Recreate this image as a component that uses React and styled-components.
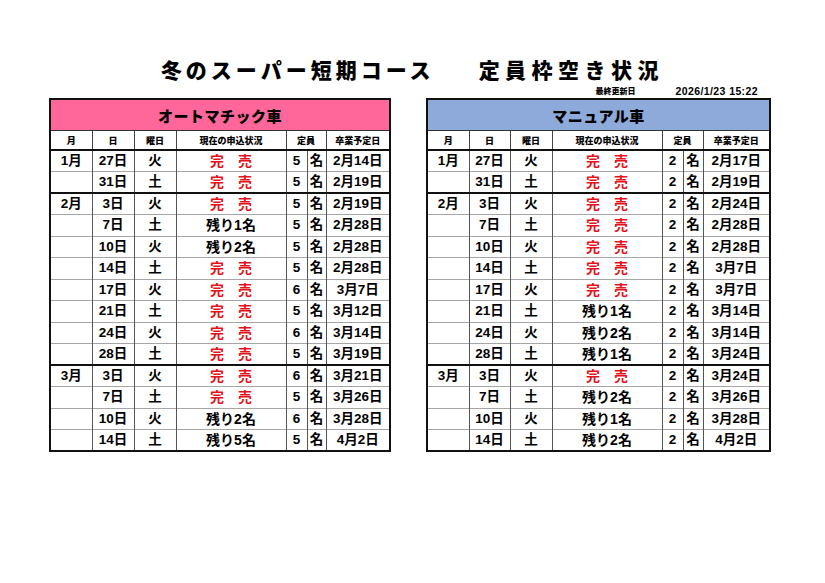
import styled, { createGlobalStyle } from "styled-components";

const GlobalStyle = createGlobalStyle`
  html, body {
    margin: 0;
    padding: 0;
    background: #fff;
  }
  body {
    font-family: "Liberation Sans", "Noto Sans CJK JP", sans-serif;
    color: #000;
  }
`;

const Page = styled.div`
  width: 825px;
  height: 583px;
  display: flex;
  flex-direction: column;
`;

const Title = styled.h1`
  margin: 56px 0 0;
  height: 27px;
  display: flex;
  justify-content: center;
  align-items: center;
  font-family: "Noto Sans CJK JP", sans-serif;
  font-weight: 900;
  font-size: 21px;
  line-height: 27px;
  gap: 44px;
`;

const TitlePart = styled.span`
  letter-spacing: ${(p) => p.$spacing}px;
`;

const Meta = styled.div`
  height: 15px;
  display: flex;
  justify-content: flex-end;
  align-items: center;
  gap: 40px;
  padding-right: 67px;
  font-weight: bold;
`;

const Updated = styled.span`
  font-family: "Noto Sans CJK JP", sans-serif;
  font-size: 8px;
  font-weight: 900;
`;

const Stamp = styled.span`
  font-size: 10.5px;
  letter-spacing: 0.4px;
`;

const Tables = styled.div`
  display: flex;
  gap: 35px;
  padding-left: 49px;
`;

const Table = styled.table`
  width: ${(p) => p.$width}px;
  table-layout: fixed;
  border-collapse: collapse;
  border: 2px solid #111;
`;

const Banner = styled.th`
  height: 30px;
  padding: 0;
  background: ${(p) => p.$color};
  border-bottom: 1px solid #333;
  font-family: "Noto Sans CJK JP", sans-serif;
  font-weight: 900;
  font-size: 15px;
  letter-spacing: 0.5px;
`;

const HeadCell = styled.th`
  height: 18px;
  padding: 0;
  border-left: 1px solid #444;
  border-bottom: 2px solid #111;
  font-family: "Noto Sans CJK JP", sans-serif;
  font-weight: 900;
  font-size: 9px;
  &:first-child {
    border-left: none;
  }
`;

const Row = styled.tr`
  height: 21.5px;
  border-top: ${(p) => (p.$group ? "2px solid #111" : "1px solid #a6a6a6")};
  &:first-of-type {
    border-top: none;
  }
`;

const Cell = styled.td`
  padding: 0;
  text-align: center;
  border-left: 1px solid #555;
  font-weight: bold;
  font-size: 13.5px;
  line-height: 20px;
  white-space: nowrap;
  &:first-child {
    border-left: none;
  }
`;

const Status = styled(Cell)`
  font-size: 14px;
  color: ${(p) => (p.$soldOut ? "#e3121b" : "#000")};
`;

const cols = {
  left: [42, 42, 42, 110, 21, 19, 64],
  right: [42, 41, 42, 110, 21, 20, 67],
};

const auto = [
  ["1月", "27日", "火", 0, 5, "2月14日"],
  ["", "31日", "土", 0, 5, "2月19日"],
  ["2月", "3日", "火", 0, 5, "2月19日"],
  ["", "7日", "土", 1, 5, "2月28日"],
  ["", "10日", "火", 2, 5, "2月28日"],
  ["", "14日", "土", 0, 5, "2月28日"],
  ["", "17日", "火", 0, 6, "3月7日"],
  ["", "21日", "土", 0, 5, "3月12日"],
  ["", "24日", "火", 0, 6, "3月14日"],
  ["", "28日", "土", 0, 5, "3月19日"],
  ["3月", "3日", "火", 0, 6, "3月21日"],
  ["", "7日", "土", 0, 5, "3月26日"],
  ["", "10日", "火", 2, 6, "3月28日"],
  ["", "14日", "土", 5, 5, "4月2日"],
];

const manual = [
  ["1月", "27日", "火", 0, 2, "2月17日"],
  ["", "31日", "土", 0, 2, "2月19日"],
  ["2月", "3日", "火", 0, 2, "2月24日"],
  ["", "7日", "土", 0, 2, "2月28日"],
  ["", "10日", "火", 0, 2, "2月28日"],
  ["", "14日", "土", 0, 2, "3月7日"],
  ["", "17日", "火", 0, 2, "3月7日"],
  ["", "21日", "土", 1, 2, "3月14日"],
  ["", "24日", "火", 2, 2, "3月14日"],
  ["", "28日", "土", 1, 2, "3月24日"],
  ["3月", "3日", "火", 0, 2, "3月24日"],
  ["", "7日", "土", 2, 2, "3月26日"],
  ["", "10日", "火", 1, 2, "3月28日"],
  ["", "14日", "土", 2, 2, "4月2日"],
];

function Schedule({ title, color, widths, rows }) {
  const total = widths.reduce((a, b) => a + b, 0);
  return (
    <Table $width={total}>
      <colgroup>
        {widths.map((w, i) => (
          <col key={i} style={{ width: w }} />
        ))}
      </colgroup>
      <thead>
        <tr>
          <Banner colSpan={7} $color={color}>
            {title}
          </Banner>
        </tr>
        <tr>
          <HeadCell>月</HeadCell>
          <HeadCell>日</HeadCell>
          <HeadCell>曜日</HeadCell>
          <HeadCell>現在の申込状況</HeadCell>
          <HeadCell colSpan={2}>定員</HeadCell>
          <HeadCell>卒業予定日</HeadCell>
        </tr>
      </thead>
      <tbody>
        {rows.map(([month, day, dow, left, cap, grad], i) => (
          <Row key={i} $group={month !== ""}>
            <Cell>{month}</Cell>
            <Cell>{day}</Cell>
            <Cell>{dow}</Cell>
            <Status $soldOut={left === 0}>
              {left === 0 ? "完\u3000売" : `残り${left}名`}
            </Status>
            <Cell>{cap}</Cell>
            <Cell>名</Cell>
            <Cell>{grad}</Cell>
          </Row>
        ))}
      </tbody>
    </Table>
  );
}

export default function App() {
  return (
    <Page>
      <GlobalStyle />
      <Title>
        <TitlePart $spacing={4}>冬のスーパー短期コース</TitlePart>
        <TitlePart $spacing={5.5}>定員枠空き状況</TitlePart>
      </Title>
      <Meta>
        <Updated>最終更新日</Updated>
        <Stamp>2026/1/23 15:22</Stamp>
      </Meta>
      <Tables>
        <Schedule title="オートマチック車" color="#ff6699" widths={cols.left} rows={auto} />
        <Schedule title="マニュアル車" color="#8eaadb" widths={cols.right} rows={manual} />
      </Tables>
    </Page>
  );
}
